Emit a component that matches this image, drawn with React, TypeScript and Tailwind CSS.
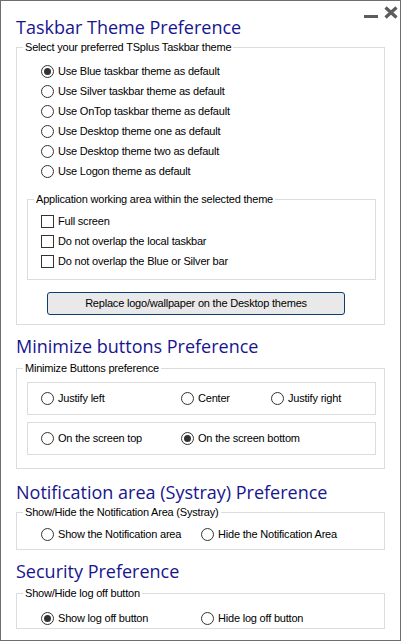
import type { ReactNode } from 'react';

const Title = ({ children, className = '' }: { children: ReactNode; className?: string }) => (
  <h2
    className={`h-[24px] whitespace-nowrap font-['Open_Sans',sans-serif] text-[18px] leading-[24px] tracking-normal text-[#17158f] ${className}`}
  >
    {children}
  </h2>
);

const Group = ({
  label,
  className = '',
  children,
}: {
  label: string;
  className?: string;
  children: ReactNode;
}) => (
  <fieldset className={`min-w-0 border border-[#dcdcdc] ${className}`}>
    <legend className="ml-[6px] px-[2px] text-[11px] leading-[13px]">{label}</legend>
    {children}
  </fieldset>
);

const Radio = ({
  label,
  checked = false,
  className = '',
}: {
  label: string;
  checked?: boolean;
  className?: string;
}) => (
  <div className={`flex h-[20px] items-center ${className}`}>
    <span className="flex size-[13px] shrink-0 items-center justify-center rounded-full border border-[#333333] bg-white">
      {checked && <span className="size-[7px] rounded-full bg-[#333333]" />}
    </span>
    <span className="ml-[4px] whitespace-nowrap">{label}</span>
  </div>
);

const Checkbox = ({ label }: { label: string }) => (
  <div className="flex h-[20px] items-center">
    <span className="size-[13px] shrink-0 border border-[#333333] bg-white" />
    <span className="ml-[4px] whitespace-nowrap">{label}</span>
  </div>
);

const WindowButtons = () => (
  <svg width="36" height="14" viewBox="0 0 36 14" className="mr-[2px] mt-[5px] shrink-0">
    <rect x="2" y="9" width="14" height="3" fill="#5c5c5c" />
    <path d="M23.5 1.5 L34.5 11.5 M34.5 1.5 L23.5 11.5" stroke="#5c5c5c" strokeWidth="3.2" />
  </svg>
);

const themes = [
  'Use Blue taskbar theme as default',
  'Use Silver taskbar theme as default',
  'Use OnTop taskbar theme as default',
  'Use Desktop theme one as default',
  'Use Desktop theme two as default',
  'Use Logon theme as default',
];

export default function App() {
  return (
    <div className="h-[642px] w-[402px] bg-white">
      <div className="h-[641px] w-[401px] border border-[#6e6e6e] bg-white pl-[15px] pr-[15px] font-['Liberation_Sans',Arial,sans-serif] text-[11px] leading-[13px] tracking-[-0.2px] text-black">
        <div className="-mr-[15px] flex items-start justify-between">
          <Title className="mt-[14px]">Taskbar Theme Preference</Title>
          <WindowButtons />
        </div>

        <Group label="Select your preferred TSplus Taskbar theme" className="mt-[2px]">
          <div className="pl-[24px] pt-[7px]">
            {themes.map((t, i) => (
              <Radio key={t} label={t} checked={i === 0} />
            ))}
          </div>
          <Group label="Application working area within the selected theme" className="ml-[10px] mr-[8px] mt-[12px]">
            <div className="pb-[8px] pl-[13px] pt-[5px]">
              <Checkbox label="Full screen" />
              <Checkbox label="Do not overlap the local taskbar" />
              <Checkbox label="Do not overlap the Blue or Silver bar" />
            </div>
          </Group>
          <button className="mb-[9px] ml-[30px] mt-[12px] block h-[23px] w-[298px] rounded-[3px] border border-[#0b3d74] bg-[#e9e9e9] text-center text-[11px] leading-[21px]">
            Replace logo/wallpaper on the Desktop themes
          </button>
        </Group>

        <Title className="mt-[9px]">Minimize buttons Preference</Title>
        <Group label="Minimize Buttons preference" className="mt-[4px]">
          <div className="ml-[10px] mr-[8px] mt-[7px] flex h-[33px] items-center border border-[#dcdcdc] pl-[13px]">
            <Radio label="Justify left" className="w-[140px]" />
            <Radio label="Center" className="w-[90px]" />
            <Radio label="Justify right" />
          </div>
          <div className="mb-[13px] ml-[10px] mr-[8px] mt-[7px] flex h-[33px] items-center border border-[#dcdcdc] pl-[13px]">
            <Radio label="On the screen top" className="w-[140px]" />
            <Radio label="On the screen bottom" checked />
          </div>
        </Group>

        <Title className="mt-[11px]">Notification area (Systray) Preference</Title>
        <Group label="Show/Hide the Notification Area (Systray)" className="mt-[2px]">
          <div className="flex pb-[5px] pl-[24px] pt-[5px]">
            <Radio label="Show the Notification area" className="w-[160px]" />
            <Radio label="Hide the Notification Area" />
          </div>
        </Group>

        <Title className="mt-[9px]">Security Preference</Title>
        <Group label="Show/Hide log off button" className="mt-[4px]">
          <div className="flex pl-[24px] pt-[8px]">
            <Radio label="Show log off button" checked className="w-[160px]" />
            <Radio label="Hide log off button" />
          </div>
        </Group>
      </div>
    </div>
  );
}
